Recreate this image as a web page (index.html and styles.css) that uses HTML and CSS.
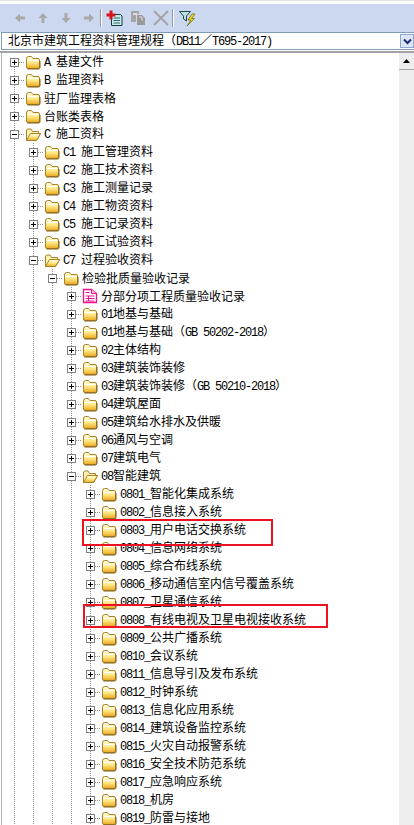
FILE: index.html
```html
<!DOCTYPE html>
<html lang="zh-CN">
<head>
    <meta charset="UTF-8">
    <meta name="viewport" content="width=device-width, initial-scale=1.0">
    <title>北京市建筑工程资料管理规程</title>
    <link rel="stylesheet" href="styles.css">
</head>
<body>
    <svg class="defs" width="0" height="0">
        <defs>
            <linearGradient id="fy" x1="0" y1="0" x2="0" y2="1">
                <stop offset="0" stop-color="#fffde6"/>
                <stop offset="0.5" stop-color="#ffe98a"/>
                <stop offset="1" stop-color="#e9a81e"/>
            </linearGradient>
            <symbol id="closed" viewBox="0 0 16 16">
                <path d="M1.500 5V13Q1.500 14.500 3 14.500H13Q14.500 14.500 14.500 13V6Q14.500 4.500 13 4.500H8L6.500 2.500H3.500Q1.500 2.500 1.500 5Z" fill="url(#fy)" stroke="#a9822a"/>
                <path d="M2.500 6.500H13.500" stroke="#fff" fill="none"/>
                <path d="M2.500 15H13.500Q15 15 15 13.500V7" stroke="#7d5c14" fill="none"/>
            </symbol>
            <symbol id="open" viewBox="0 0 16 16">
                <path d="M1.500 4V14.500H11.500L15.500 7.500H13.500V5.500H7.500L6 3H2.500Z" fill="#fff3b0" stroke="#a9822a"/>
                <path d="M1.500 14.500L5.500 7.500H15.500L11.500 14.500Z" fill="url(#fy)" stroke="#a9822a"/>
            </symbol>
            <symbol id="sheet" viewBox="0 0 16 16">
                <path d="M1.500 1.500H9.500L14.500 5.500V14.500H1.500Z" fill="#fff" stroke="#f0108c" stroke-width="1.300"/>
                <path d="M9.500 1.500V5.500H14.500" fill="#ffc0e0" stroke="#f0108c"/>
                <path d="M3.500 4.500H7.500M3.500 8H12.500M3.500 10.500H12.500M3.500 13H12.500M6.500 8V13" stroke="#f0108c" fill="none"/>
            </symbol>
        </defs>
    </svg>

    <div class="toolbar">
        <span class="tool">
            <svg width="16" height="16" viewBox="0 0 16 16"><path d="M3 8L8 3.500V6.500H13V9.500H8V12.500Z" fill="#a9a9a9"/></svg>
        </span>
        <span class="tool">
            <svg width="16" height="16" viewBox="0 0 16 16"><path d="M8 3L12.500 8H9.500V13H6.500V8H3.500Z" fill="#a9a9a9"/></svg>
        </span>
        <span class="tool">
            <svg width="16" height="16" viewBox="0 0 16 16"><path d="M8 13L12.500 8H9.500V3H6.500V8H3.500Z" fill="#a9a9a9"/></svg>
        </span>
        <span class="tool">
            <svg width="16" height="16" viewBox="0 0 16 16"><path d="M13 8L8 3.500V6.500H3V9.500H8V12.500Z" fill="#a9a9a9"/></svg>
        </span>
        <span class="divider"></span>
        <span class="tool-icon">
            <svg width="17" height="17" viewBox="0 0 17 17">
                <path d="M5.500 4.500H14.500L16 6V15.500H5.500Z" fill="#c8ece8" stroke="#123c44"/>
                <path d="M7.500 8H14M7.500 10.500H14M7.500 13H14" stroke="#2a6a70"/>
                <path d="M3.500 0.500H6.500V3.500H9.500V6.500H6.500V9.500H3.500V6.500H0.500V3.500H3.500Z" fill="#d8141c"/>
            </svg>
        </span>
        <span class="tool-icon">
            <svg width="16" height="16" viewBox="0 0 16 16">
                <path d="M1 1H9V4H6V12H1Z" fill="#a6a6a6"/>
                <path d="M3 3H7V5H3Z" fill="#dcdcdc"/>
                <path d="M7 5H12L15 8V15H7Z" fill="#9a9a9a"/>
                <path d="M9 7H12V10H13" fill="none" stroke="#dcdcdc"/>
            </svg>
        </span>
        <span class="tool-icon">
            <svg width="16" height="16" viewBox="0 0 16 16"><path d="M1 1L15 15M15 1L1 15" stroke="#a4a4a4" stroke-width="2" fill="none"/></svg>
        </span>
        <span class="divider divider-two"></span>
        <span class="tool-icon">
            <svg width="17" height="17" viewBox="0 0 17 17">
                <path d="M0.500 1.500H11.500L7.500 6V11L4.500 9V6Z" fill="#bfe0dc" stroke="#1d4c50"/>
                <path d="M13 4L9 10H12L8 16L15.500 8.500H12.500L16 4Z" fill="#f5e020" stroke="#6a5c00" stroke-width="0.700"/>
            </svg>
        </span>
    </div>

    <div class="combo">
        <span class="combo-text">北京市建筑工程资料管理规程（<span class="la">DB11</span>／<span class="la">T695-2017)</span></span>
        <span class="combo-btn">
            <svg width="9" height="7" viewBox="0 0 9 7"><path d="M1 1.500L4.500 5L8 1.500" stroke="#1c2f6a" stroke-width="2" fill="none"/></svg>
        </span>
    </div>
    <div class="sep"></div>

    <div class="main">
        <div class="tree">
            <div class="row"><span class="toggle first"><i class="box plus"></i><i class="dash"></i></span><svg class="ico"><use href="#closed"/></svg><span class="label"><span class="la">A </span>基建文件</span></div>
            <div class="row"><span class="toggle"><i class="box plus"></i><i class="dash"></i></span><svg class="ico"><use href="#closed"/></svg><span class="label"><span class="la">B </span>监理资料</span></div>
            <div class="row"><span class="toggle"><i class="box plus"></i><i class="dash"></i></span><svg class="ico"><use href="#closed"/></svg><span class="label">驻厂监理表格</span></div>
            <div class="row"><span class="toggle"><i class="box plus"></i><i class="dash"></i></span><svg class="ico"><use href="#closed"/></svg><span class="label">台账类表格</span></div>
            <div class="row"><span class="toggle"><i class="box"></i><i class="dash"></i></span><svg class="ico"><use href="#open"/></svg><span class="label"><span class="la">C </span>施工资料</span></div>

            <div class="row"><i class="guide"></i><span class="toggle"><i class="box plus"></i><i class="dash"></i></span><svg class="ico"><use href="#closed"/></svg><span class="label"><span class="la">C1 </span>施工管理资料</span></div>
            <div class="row"><i class="guide"></i><span class="toggle"><i class="box plus"></i><i class="dash"></i></span><svg class="ico"><use href="#closed"/></svg><span class="label"><span class="la">C2 </span>施工技术资料</span></div>
            <div class="row"><i class="guide"></i><span class="toggle"><i class="box plus"></i><i class="dash"></i></span><svg class="ico"><use href="#closed"/></svg><span class="label"><span class="la">C3 </span>施工测量记录</span></div>
            <div class="row"><i class="guide"></i><span class="toggle"><i class="box plus"></i><i class="dash"></i></span><svg class="ico"><use href="#closed"/></svg><span class="label"><span class="la">C4 </span>施工物资资料</span></div>
            <div class="row"><i class="guide"></i><span class="toggle"><i class="box plus"></i><i class="dash"></i></span><svg class="ico"><use href="#closed"/></svg><span class="label"><span class="la">C5 </span>施工记录资料</span></div>
            <div class="row"><i class="guide"></i><span class="toggle"><i class="box plus"></i><i class="dash"></i></span><svg class="ico"><use href="#closed"/></svg><span class="label"><span class="la">C6 </span>施工试验资料</span></div>
            <div class="row"><i class="guide"></i><span class="toggle"><i class="box"></i><i class="dash"></i></span><svg class="ico"><use href="#open"/></svg><span class="label"><span class="la">C7 </span>过程验收资料</span></div>

            <div class="row"><i class="guide"></i><i class="guide"></i><span class="toggle"><i class="box"></i><i class="dash"></i></span><svg class="ico"><use href="#closed"/></svg><span class="label">检验批质量验收记录</span></div>

            <div class="row"><i class="guide"></i><i class="guide"></i><i class="guide"></i><span class="toggle"><i class="box plus"></i><i class="dash"></i></span><svg class="ico"><use href="#sheet"/></svg><span class="label">分部分项工程质量验收记录</span></div>
            <div class="row"><i class="guide"></i><i class="guide"></i><i class="guide"></i><span class="toggle"><i class="box plus"></i><i class="dash"></i></span><svg class="ico"><use href="#closed"/></svg><span class="label"><span class="la">01</span>地基与基础</span></div>
            <div class="row"><i class="guide"></i><i class="guide"></i><i class="guide"></i><span class="toggle"><i class="box plus"></i><i class="dash"></i></span><svg class="ico"><use href="#closed"/></svg><span class="label"><span class="la">01</span>地基与基础（<span class="la">GB 50202-2018</span>）</span></div>
            <div class="row"><i class="guide"></i><i class="guide"></i><i class="guide"></i><span class="toggle"><i class="box plus"></i><i class="dash"></i></span><svg class="ico"><use href="#closed"/></svg><span class="label"><span class="la">02</span>主体结构</span></div>
            <div class="row"><i class="guide"></i><i class="guide"></i><i class="guide"></i><span class="toggle"><i class="box plus"></i><i class="dash"></i></span><svg class="ico"><use href="#closed"/></svg><span class="label"><span class="la">03</span>建筑装饰装修</span></div>
            <div class="row"><i class="guide"></i><i class="guide"></i><i class="guide"></i><span class="toggle"><i class="box plus"></i><i class="dash"></i></span><svg class="ico"><use href="#closed"/></svg><span class="label"><span class="la">03</span>建筑装饰装修（<span class="la">GB 50210-2018</span>）</span></div>
            <div class="row"><i class="guide"></i><i class="guide"></i><i class="guide"></i><span class="toggle"><i class="box plus"></i><i class="dash"></i></span><svg class="ico"><use href="#closed"/></svg><span class="label"><span class="la">04</span>建筑屋面</span></div>
            <div class="row"><i class="guide"></i><i class="guide"></i><i class="guide"></i><span class="toggle"><i class="box plus"></i><i class="dash"></i></span><svg class="ico"><use href="#closed"/></svg><span class="label"><span class="la">05</span>建筑给水排水及供暖</span></div>
            <div class="row"><i class="guide"></i><i class="guide"></i><i class="guide"></i><span class="toggle"><i class="box plus"></i><i class="dash"></i></span><svg class="ico"><use href="#closed"/></svg><span class="label"><span class="la">06</span>通风与空调</span></div>
            <div class="row"><i class="guide"></i><i class="guide"></i><i class="guide"></i><span class="toggle"><i class="box plus"></i><i class="dash"></i></span><svg class="ico"><use href="#closed"/></svg><span class="label"><span class="la">07</span>建筑电气</span></div>
            <div class="row"><i class="guide"></i><i class="guide"></i><i class="guide"></i><span class="toggle"><i class="box"></i><i class="dash"></i></span><svg class="ico"><use href="#open"/></svg><span class="label"><span class="la">08</span>智能建筑</span></div>

            <div class="row"><i class="guide"></i><i class="guide"></i><i class="guide"></i><i class="guide"></i><span class="toggle"><i class="box plus"></i><i class="dash"></i></span><svg class="ico"><use href="#closed"/></svg><span class="label"><span class="la">0801_</span>智能化集成系统</span></div>
            <div class="row"><i class="guide"></i><i class="guide"></i><i class="guide"></i><i class="guide"></i><span class="toggle"><i class="box plus"></i><i class="dash"></i></span><svg class="ico"><use href="#closed"/></svg><span class="label"><span class="la">0802_</span>信息接入系统</span></div>
            <div class="row"><i class="guide"></i><i class="guide"></i><i class="guide"></i><i class="guide"></i><span class="toggle"><i class="box plus"></i><i class="dash"></i></span><svg class="ico"><use href="#closed"/></svg><span class="label"><span class="la">0803_</span>用户电话交换系统</span></div>
            <div class="row"><i class="guide"></i><i class="guide"></i><i class="guide"></i><i class="guide"></i><span class="toggle"><i class="box plus"></i><i class="dash"></i></span><svg class="ico"><use href="#closed"/></svg><span class="label"><span class="la">0804_</span>信息网络系统</span></div>
            <div class="row"><i class="guide"></i><i class="guide"></i><i class="guide"></i><i class="guide"></i><span class="toggle"><i class="box plus"></i><i class="dash"></i></span><svg class="ico"><use href="#closed"/></svg><span class="label"><span class="la">0805_</span>综合布线系统</span></div>
            <div class="row"><i class="guide"></i><i class="guide"></i><i class="guide"></i><i class="guide"></i><span class="toggle"><i class="box plus"></i><i class="dash"></i></span><svg class="ico"><use href="#closed"/></svg><span class="label"><span class="la">0806_</span>移动通信室内信号覆盖系统</span></div>
            <div class="row"><i class="guide"></i><i class="guide"></i><i class="guide"></i><i class="guide"></i><span class="toggle"><i class="box plus"></i><i class="dash"></i></span><svg class="ico"><use href="#closed"/></svg><span class="label"><span class="la">0807_</span>卫星通信系统</span></div>
            <div class="row"><i class="guide"></i><i class="guide"></i><i class="guide"></i><i class="guide"></i><span class="toggle"><i class="box plus"></i><i class="dash"></i></span><svg class="ico"><use href="#closed"/></svg><span class="label"><span class="la">0808_</span>有线电视及卫星电视接收系统</span></div>
            <div class="row"><i class="guide"></i><i class="guide"></i><i class="guide"></i><i class="guide"></i><span class="toggle"><i class="box plus"></i><i class="dash"></i></span><svg class="ico"><use href="#closed"/></svg><span class="label"><span class="la">0809_</span>公共广播系统</span></div>
            <div class="row"><i class="guide"></i><i class="guide"></i><i class="guide"></i><i class="guide"></i><span class="toggle"><i class="box plus"></i><i class="dash"></i></span><svg class="ico"><use href="#closed"/></svg><span class="label"><span class="la">0810_</span>会议系统</span></div>
            <div class="row"><i class="guide"></i><i class="guide"></i><i class="guide"></i><i class="guide"></i><span class="toggle"><i class="box plus"></i><i class="dash"></i></span><svg class="ico"><use href="#closed"/></svg><span class="label"><span class="la">0811_</span>信息导引及发布系统</span></div>
            <div class="row"><i class="guide"></i><i class="guide"></i><i class="guide"></i><i class="guide"></i><span class="toggle"><i class="box plus"></i><i class="dash"></i></span><svg class="ico"><use href="#closed"/></svg><span class="label"><span class="la">0812_</span>时钟系统</span></div>
            <div class="row"><i class="guide"></i><i class="guide"></i><i class="guide"></i><i class="guide"></i><span class="toggle"><i class="box plus"></i><i class="dash"></i></span><svg class="ico"><use href="#closed"/></svg><span class="label"><span class="la">0813_</span>信息化应用系统</span></div>
            <div class="row"><i class="guide"></i><i class="guide"></i><i class="guide"></i><i class="guide"></i><span class="toggle"><i class="box plus"></i><i class="dash"></i></span><svg class="ico"><use href="#closed"/></svg><span class="label"><span class="la">0814_</span>建筑设备监控系统</span></div>
            <div class="row"><i class="guide"></i><i class="guide"></i><i class="guide"></i><i class="guide"></i><span class="toggle"><i class="box plus"></i><i class="dash"></i></span><svg class="ico"><use href="#closed"/></svg><span class="label"><span class="la">0815_</span>火灾自动报警系统</span></div>
            <div class="row"><i class="guide"></i><i class="guide"></i><i class="guide"></i><i class="guide"></i><span class="toggle"><i class="box plus"></i><i class="dash"></i></span><svg class="ico"><use href="#closed"/></svg><span class="label"><span class="la">0816_</span>安全技术防范系统</span></div>
            <div class="row"><i class="guide"></i><i class="guide"></i><i class="guide"></i><i class="guide"></i><span class="toggle"><i class="box plus"></i><i class="dash"></i></span><svg class="ico"><use href="#closed"/></svg><span class="label"><span class="la">0817_</span>应急响应系统</span></div>
            <div class="row"><i class="guide"></i><i class="guide"></i><i class="guide"></i><i class="guide"></i><span class="toggle"><i class="box plus"></i><i class="dash"></i></span><svg class="ico"><use href="#closed"/></svg><span class="label"><span class="la">0818_</span>机房</span></div>
            <div class="row"><i class="guide"></i><i class="guide"></i><i class="guide"></i><i class="guide"></i><span class="toggle"><i class="box plus"></i><i class="dash"></i></span><svg class="ico"><use href="#closed"/></svg><span class="label"><span class="la">0819_</span>防雷与接地</span></div>

            <div class="mark mark-one"></div>
            <div class="mark mark-two"></div>
        </div>
        <div class="scrollbar">
            <div class="scroll-up">
                <svg width="7" height="4" viewBox="0 0 7 4"><path d="M3.500 0L7 4H0Z" fill="#000"/></svg>
            </div>
        </div>
    </div>
</body>
</html>
```

FILE: styles.css
```css
* {
    margin: 0;
    padding: 0;
    box-sizing: border-box;
}

html, body {
    height: 825px;
    overflow: hidden;
}

body {
    background: white;
    color: #000;
    font-family: 'Noto Sans CJK SC', 'Liberation Sans', sans-serif;
    font-size: 12px;
    border-top: 1px solid #e0e0e0;
}

.defs {
    display: block;
    height: 0;
}

.toolbar {
    margin-top: 3px;
    height: 28px;
    background: #ccd8ef;
    display: flex;
    align-items: center;
    padding-left: 8px;
}

.tool {
    width: 23px;
    display: flex;
    justify-content: center;
}

.tool-icon {
    display: flex;
    justify-content: center;
    margin-right: 7px;
}

.divider {
    width: 1px;
    height: 18px;
    background: #8f97a8;
    margin-right: 5px;
    box-shadow: 1px 0 0 #fff;
}

.divider-two {
    margin-left: -4px;
    margin-right: 6px;
}

.combo {
    height: 18px;
    margin-left: 1px;
    border-top: 1px solid #7f9db9;
    border-bottom: 1px solid #7f9db9;
    border-left: 1px solid #7f9db9;
    display: flex;
    align-items: center;
    padding-left: 6px;
    background: white;
}

.combo-text {
    flex: 1;
    white-space: pre;
    line-height: 16px;
}

.combo-btn {
    width: 14px;
    height: 14px;
    background: #dbe6f8;
    border: 1px solid #8fa6cf;
    display: flex;
    align-items: center;
    justify-content: center;
}

.sep {
    height: 3px;
    border-bottom: 2px solid #a3a3a3;
}

.main {
    display: flex;
    height: 772px;
    margin-left: 1px;
    border-left: 1px solid #b4b4b4;
    overflow: hidden;
}

.tree {
    flex: 1;
    position: relative;
    padding-left: 3px;
}

.row {
    display: flex;
    align-items: center;
    height: 18px;
    white-space: pre;
}

.guide,
.toggle {
    width: 19px;
    height: 18px;
    flex: none;
    background-image: linear-gradient(#909090 50%, transparent 50%);
    background-size: 1px 2px;
    background-position: 9px 0;
    background-repeat: repeat-y;
}

.toggle {
    display: flex;
    align-items: center;
    padding-left: 5px;
}

.toggle.first {
    background-image: linear-gradient(white, white), linear-gradient(#909090 50%, transparent 50%);
    background-size: 1px 9px, 1px 2px;
    background-position: 9px 0, 9px 0;
    background-repeat: no-repeat, repeat-y;
}

.box {
    width: 9px;
    height: 9px;
    border: 1px solid #808080;
    background: linear-gradient(#000, #000) center / 5px 1px no-repeat, white;
}

.box.plus {
    background: linear-gradient(#000, #000) center / 5px 1px no-repeat, linear-gradient(#000, #000) center / 1px 5px no-repeat, white;
}

.dash {
    flex: 1;
    height: 1px;
    background-image: linear-gradient(90deg, #909090 50%, transparent 50%);
    background-size: 2px 1px;
}

.ico {
    width: 16px;
    height: 16px;
    margin-left: 1px;
    flex: none;
}

.label {
    padding-left: 3px;
    line-height: 18px;
}

.la {
    font-family: 'Liberation Mono', monospace;
    letter-spacing: -1.2px;
}

.mark {
    position: absolute;
    border: 2px solid #ee1122;
}

.mark-one {
    left: 80px;
    top: 466px;
    width: 191px;
    height: 27px;
}

.mark-two {
    left: 81px;
    top: 551px;
    width: 245px;
    height: 24px;
}

.scrollbar {
    width: 15px;
    background: #eeeeee;
}

.scroll-up {
    height: 17px;
    border-bottom: 1px solid #a8a8a8;
    display: flex;
    align-items: center;
    justify-content: center;
}
```
